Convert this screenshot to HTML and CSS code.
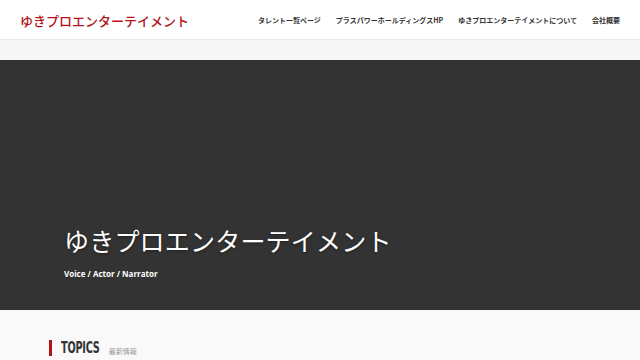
FILE: index.html
```html
<!DOCTYPE html>
<html lang="ja">
<head>
  <meta charset="utf-8">
  <title>ゆきプロエンターテイメント</title>
  <link rel="stylesheet" href="styles.css">
</head>
<body>

<header id="header">
  <a class="logo" href="#">ゆきプロエンターテイメント</a>
  <nav class="gnav">
    <a href="#">タレント一覧ページ</a>
    <a href="#">プラスパワーホールディングスHP</a>
    <a href="#">ゆきプロエンターテイメントについて</a>
    <a href="#">会社概要</a>
  </nav>
</header>

<div class="spacer"></div>

<section class="hero">
  <h1>ゆきプロエンターテイメント</h1>
  <p>Voice / Actor / Narrator</p>
</section>

<section class="topics">
  <h2><span class="en">TOPICS</span><span class="ja">最新情報</span></h2>
</section>

</body>
</html>
```

FILE: styles.css
```css
* {
  box-sizing: border-box;
}

body {
  margin: 0;
  padding: 0;
  font-family: "Noto Sans CJK JP", "Noto Sans", sans-serif;
  background-color: #f9f9f9;
  color: #333;
}

a {
  text-decoration: none;
  color: inherit;
}

#header {
  height: 40px;
  display: flex;
  align-items: center;
  justify-content: space-between;
  padding: 0 20px;
  background-color: #fff;
  border-bottom: 1px solid #eaeaea;
}
.logo {
  color: #b3121a;
  font-size: 13px;
  font-weight: 500;
  margin-top: 1px;
}
.gnav {
  display: flex;
  gap: 15px;
  font-size: 7px;
  font-weight: bold;
  color: #333;
}

.spacer {
  height: 20px;
  background-color: #f7f7f7;
}

.hero {
  height: 250px;
  background-color: #333;
  color: #fff;
  padding: 162px 0 0 64px;
}
.hero h1 {
  margin: 0;
  font-size: 25px;
  font-weight: normal;
  line-height: 36px;
  letter-spacing: 0.2px;
  text-shadow: 0 1px 3px rgba(0,0,0,.4);
}
.hero p {
  margin: 10px 0 0;
  font-family: "Open Sans", sans-serif;
  font-size: 8px;
  font-weight: bold;
}

.topics {
  padding: 30px 0 0 49px;
}
.topics h2 {
  margin: 0;
  display: flex;
  align-items: flex-end;
  border-left: 3px solid #b3121a;
  padding-left: 9px;
  height: 16px;
}
.topics .en {
  display: inline-block;
  font-family: "DejaVu Sans Condensed", sans-serif;
  font-size: 15px;
  line-height: 15px;
  letter-spacing: -0.3px;
  color: #333;
  transform: scaleX(0.72);
  transform-origin: left bottom;
  margin-right: -15px;
}
.topics .ja {
  font-size: 7px;
  font-weight: normal;
  color: #999;
  margin-left: 9px;
  line-height: 9px;
}
```
